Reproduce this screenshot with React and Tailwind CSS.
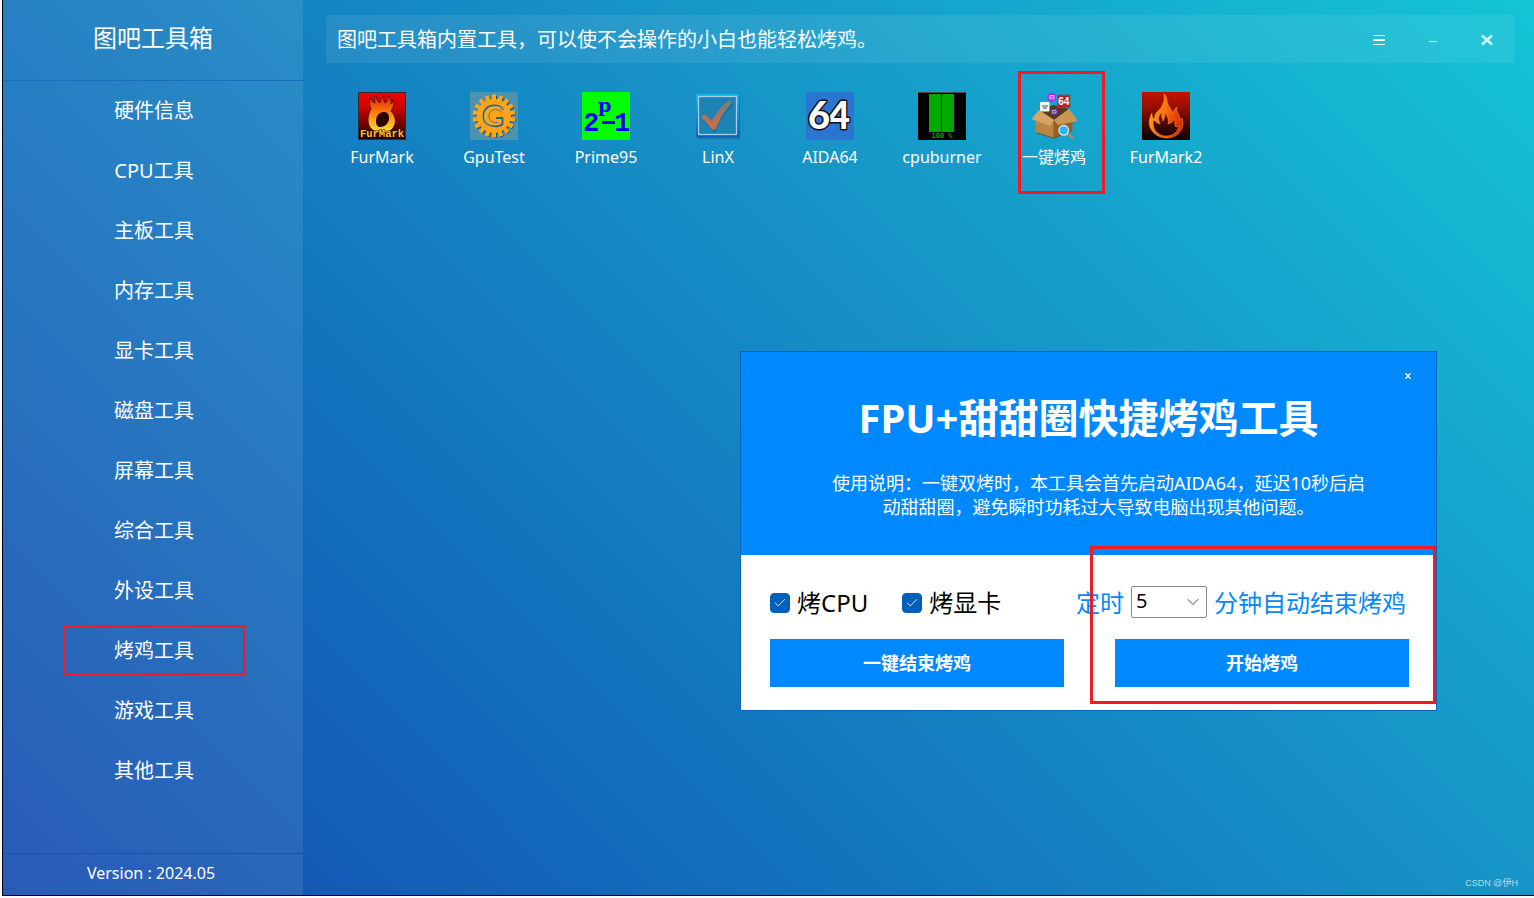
import React, { useState } from "react";
import { Check, ChevronDown } from "lucide-react";

const categories = [
  "硬件信息", "CPU工具", "主板工具", "内存工具", "显卡工具", "磁盘工具",
  "屏幕工具", "综合工具", "外设工具", "烤鸡工具", "游戏工具", "其他工具",
];

const FurMarkIcon = () => (
  <svg width="48" height="48" viewBox="0 0 48 48" aria-hidden="true">
    <defs>
      <linearGradient id="fmBg" x1="0" y1="0" x2="0" y2="1">
        <stop offset="0" stopColor="#f00500" />
        <stop offset="0.35" stopColor="#c80400" />
        <stop offset="1" stopColor="#150000" />
      </linearGradient>
      <linearGradient id="fmFlame" x1="0" y1="0" x2="0" y2="1">
        <stop offset="0" stopColor="#d81c00" />
        <stop offset="0.45" stopColor="#ff7a10" />
        <stop offset="1" stopColor="#ffe437" />
      </linearGradient>
    </defs>
    <rect x="0.5" y="0.5" width="47" height="47" fill="url(#fmBg)" stroke="#3b2a2c" />
    <path
      d="M13 17c-2-4-2-8 0-12 1 4 2 5 4 6-1-4-1-6 1-8 1 4 2 7 4 8 0-3 1-5 4-8-1 4 0 6 1 8 2-1 3-4 3-8 3 4 4 7 3 9 1-1 2-3 2-5 2 5 0 9-2 12 4 4 5 9 4 13-2 6-7 9-13 9-8 0-14-5-14-13 0-4 1-8 3-11z"
      fill="url(#fmFlame)" stroke="#3a0800" strokeWidth="0.8"
    />
    <path d="M26 20c-5 0-8 4-8 9 0 4 2 6 4 6 5 0 9-4 9-9 0-4-2-6-5-6z" fill="#2a0300" />
    <text x="24" y="45" textAnchor="middle" fontFamily="Liberation Mono" fontWeight="700" fontSize="10.500" fill="#ffc61c" stroke="#1a0000" strokeWidth="1" paintOrder="stroke">FurMark</text>
  </svg>
);

const GpuTestIcon = () => (
  <svg width="48" height="48" viewBox="0 0 48 48" aria-hidden="true">
    <rect width="48" height="48" fill="#4c93b0" />
    <g transform="translate(1 1)" fill="#1c5878">
      <circle cx="24" cy="24" r="17" />
      {Array.from({ length: 18 }).map((_, i) => (
        <rect key={i} x="22" y="3" width="4" height="6" transform={`rotate(${i * 20} 24 24)`} />
      ))}
    </g>
    <g fill="#ffa516">
      <circle cx="24" cy="24" r="17" />
      {Array.from({ length: 18 }).map((_, i) => (
        <rect key={i} x="22" y="2.6" width="4" height="6" transform={`rotate(${i * 20} 24 24)`} />
      ))}
    </g>
    <path d="M33.500 18c-2-3.500-5-4.500-9-4.500-7 0-11 4-11 10.500s4 10.500 11 10.500c4 0 6.500-1 8-2.500v-6h-6.500" fill="none" stroke="#2f6272" strokeWidth="1.800" />
    <path d="M34.500 18.500c-2-3-5-4-9-4-7 0-11 4-11 10.500s4 10.500 11 10.500" fill="none" stroke="#d9c79a" strokeWidth="0.600" />
    <path d="M32 20.500c-2-2-4-2.800-6.500-2.800-4 0-6.500 2.300-6.500 6.300s2.500 6.500 6.500 6.500h3" fill="none" stroke="#54736d" strokeWidth="1" />
  </svg>
);

const Prime95Icon = () => (
  <svg width="48" height="48" viewBox="0 0 48 48" aria-hidden="true">
    <rect width="48" height="48" fill="#00ff00" />
    <g fill="#0000ff" fontWeight="700">
      <text x="1" y="39" fontFamily="Liberation Mono" fontSize="27">2</text>
      <text x="16" y="20" fontFamily="DejaVu Serif" fontSize="19">p</text>
      <rect x="20" y="29" width="13" height="3" />
      <text x="32" y="39" fontFamily="Liberation Mono" fontSize="27">1</text>
    </g>
  </svg>
);

const LinXIcon = () => (
  <svg width="48" height="48" viewBox="0 0 48 48" aria-hidden="true">
    <defs>
      <linearGradient id="lxFrame" x1="0" y1="0" x2="0" y2="1">
        <stop offset="0" stopColor="#12b4f2" />
        <stop offset="1" stopColor="#0b5cc0" />
      </linearGradient>
      <linearGradient id="lxCheck" x1="0" y1="0" x2="0" y2="1">
        <stop offset="0" stopColor="#6b7f86" />
        <stop offset="1" stopColor="#dc6a3c" />
      </linearGradient>
    </defs>
    <rect x="3" y="4" width="43" height="43" rx="1" fill="#0b5a86" opacity="0.5" />
    <rect x="2" y="2" width="43" height="43" rx="1" fill="url(#lxFrame)" />
    <rect x="4.500" y="4.500" width="38" height="38" fill="#1c84b4" stroke="#a9cfe6" strokeWidth="1.300" />
    <path d="M10 25l9 10c4-10 9-18 18-25" fill="none" stroke="#0f638e" strokeWidth="5" transform="translate(1 2)" opacity="0.4" />
    <path d="M8 26c-1-3 2-4 4-3l6 6C22 21 28 13 34 9c2-2 5 0 3 3-7 7-11 15-15 24-1 2-4 2-5 0z" fill="url(#lxCheck)" />
  </svg>
);

const Aida64Icon = () => (
  <svg width="48" height="48" viewBox="0 0 48 48" aria-hidden="true">
    <rect width="48" height="48" fill="#2b75d2" />
    <g fontFamily="Lato" fontWeight="900" fontSize="38" fill="#fff" stroke="#111" strokeWidth="3" paintOrder="stroke" strokeLinejoin="round">
      <text x="22" y="37">4</text>
      <text x="2" y="37">6</text>
    </g>
  </svg>
);

const CpuBurnerIcon = () => (
  <svg width="48" height="48" viewBox="0 0 48 48" aria-hidden="true">
    <rect width="48" height="48" fill="#000" />
    <rect width="48" height="1" fill="#4a4a4a" />
    <rect x="11" y="2" width="12" height="38" fill="#00aa00" />
    <rect x="24" y="2" width="12" height="38" fill="#00aa00" />
    <text x="24" y="46" textAnchor="middle" fontFamily="DejaVu Sans Mono" fontWeight="700" fontSize="7" fill="#00a000">100 %</text>
  </svg>
);

const BoxIcon = () => (
  <svg width="48" height="48" viewBox="0 0 48 48" aria-hidden="true">
    <path d="M9 18l14.500-5L39 17 24 28z" fill="#5c3a17" />
    <circle cx="21.700" cy="5.300" r="4.300" fill="#b21fe6" />
    <path d="M19.500 3.500h4.500v3.500h-4.500zM19.500 5.200h4.500" fill="none" stroke="#f3b6ff" strokeWidth="0.900" />
    <rect x="27.500" y="3" width="12.500" height="12.500" fill="#b5232a" stroke="#5d5f6a" strokeWidth="0.800" />
    <text x="33.800" y="13" textAnchor="middle" fontFamily="Liberation Sans" fontWeight="700" fontSize="10" fill="#fff">64</text>
    <rect x="10" y="10" width="9.500" height="9.500" rx="1" fill="#f4f4f4" />
    <path d="M12 14h6M13 16h4" stroke="#555" strokeWidth="1.200" />
    <rect x="21" y="16.500" width="6.500" height="6.500" fill="#58359d" />
    <path d="M22.500 18.500h3.500v2.500h-3.500z" fill="none" stroke="#d9c8ff" strokeWidth="0.800" />
    <path d="M5.500 25l18 3v18.500L5.500 40z" fill="#b98444" />
    <path d="M23.500 28l19-3v14l-19 7.500z" fill="#956026" />
    <path d="M9 18l15 10-4 6L1.500 27z" fill="#d6a563" />
    <path d="M39 17L24 28l4 5 20-4z" fill="#c99654" />
    <path d="M7 41l16.500 5 18-7" fill="none" stroke="#704515" strokeWidth="0.800" />
    <path d="M37.500 42l4.500 3.500" stroke="#b88961" strokeWidth="2.500" strokeLinecap="round" />
    <circle cx="33.700" cy="38.300" r="4.800" fill="#28b4ee" stroke="#d8eef8" strokeWidth="1.300" />
  </svg>
);

const FurMark2Icon = () => (
  <svg width="48" height="48" viewBox="0 0 48 48" aria-hidden="true">
    <defs>
      <linearGradient id="fm2Bg" x1="0" y1="0" x2="0" y2="1">
        <stop offset="0" stopColor="#c41200" />
        <stop offset="0.300" stopColor="#9c0e00" />
        <stop offset="1" stopColor="#050000" />
      </linearGradient>
      <linearGradient id="fm2Flame" x1="0" y1="0" x2="1" y2="0.400">
        <stop offset="0" stopColor="#ffa51c" />
        <stop offset="0.500" stopColor="#f87812" />
        <stop offset="1" stopColor="#e52c04" />
      </linearGradient>
    </defs>
    <rect width="48" height="48" fill="url(#fm2Bg)" />
    <path
      d="M22 2c4 3 2 8 5 12 2 3 3 5 3 7 2-2 2-4 5-6-1 5 1 6 2 8 0 2 1 4 1 5l2-2c2 7 0 12-4 16-7 6-18 5-24-1-6-6-6-13-2-20 0 4 1 6 3 8-2-9 5-10 7-15 2-4 3-8 2-12z
         M20 20c-4 4-4 7-2 12-4-1-5-3-6-6-3 10 3 18 12 18 8 0 12-5 13-10-2 1-3 1-4 0 0-3 0-5-1-7-1 3-3 4-6 5 1-4 0-7-3-11 0 4-1 6-2 8-1-3-2-5-1-9z"
      fill="url(#fm2Flame)" fillRule="evenodd" stroke="#f8a030" strokeWidth="0.500"
    />
  </svg>
);

const tools = [
  { name: "FurMark", Icon: FurMarkIcon },
  { name: "GpuTest", Icon: GpuTestIcon },
  { name: "Prime95", Icon: Prime95Icon },
  { name: "LinX", Icon: LinXIcon },
  { name: "AIDA64", Icon: Aida64Icon },
  { name: "cpuburner", Icon: CpuBurnerIcon },
  { name: "一键烤鸡", Icon: BoxIcon, marked: true },
  { name: "FurMark2", Icon: FurMark2Icon },
];

const Sidebar = ({ active, onSelect }) => (
  <aside className="flex w-[300px] shrink-0 flex-col bg-white/9 text-white">
    <h1 className="flex h-20 items-center justify-center pb-1 text-2xl">图吧工具箱</h1>
    <nav className="flex flex-1 flex-col border-t border-[#1c6dbd]">
      {categories.map((name) => (
        <button key={name} onClick={() => onSelect(name)}
          className="relative h-[60px] w-full pl-0.5 text-center text-xl">
          {name}
          {name === active && (
            <span className="pointer-events-none absolute top-1 right-[58px] bottom-1.5 left-[60px] border-2 border-[#ed1c24]" />
          )}
        </button>
      ))}
    </nav>
    <div className="flex h-[42px] items-center justify-center border-t border-[#1a50b0] pr-1 pb-1 text-base">
      Version : 2024.05
    </div>
  </aside>
);

const TopBar = () => (
  <header className="flex h-12 items-center bg-white/8 pl-[11px] text-white">
    <p className="flex-1 pt-0.5 text-xl">图吧工具箱内置工具，可以使不会操作的小白也能轻松烤鸡。</p>
    <button aria-label="菜单" className="flex h-full w-[54px] items-center justify-center pt-0.5">
      <svg width="12" height="10" viewBox="0 0 12 10" fill="#fff">
        <path d="M0 0h12v1H0zM0 4h12v2H0zM0 9h12v1H0z" />
      </svg>
    </button>
    <button aria-label="最小化" className="flex h-full w-[54px] items-center justify-center pt-0.5">
      <svg width="8" height="10" viewBox="0 0 8 10"><path d="M0 6.500h8" stroke="#b5ebf1" strokeWidth="1.200" /></svg>
    </button>
    <button aria-label="关闭" className="flex h-full w-[54px] items-center justify-center pt-0.5">
      <svg width="12" height="12" viewBox="0 0 12 12"><path d="M1 1.500l10 9M11 1.500l-10 9" stroke="#cdf3f6" strokeWidth="2.600" /></svg>
    </button>
  </header>
);

const CheckOption = ({ label, checked, onChange }) => (
  <label className="flex items-center gap-[7px] text-2xl text-black">
    <span className="relative flex size-5">
      <input type="checkbox" checked={checked} onChange={onChange}
        className="size-5 appearance-none rounded border border-[#005fb8] checked:bg-[#005fb8]" />
      {checked && (
        <Check size={14} strokeWidth={1.5} className="pointer-events-none absolute top-[3px] left-[3px] text-white" />
      )}
    </span>
    {label}
  </label>
);

const BurnDialog = () => {
  const [cpu, setCpu] = useState(true);
  const [gpu, setGpu] = useState(true);
  const [minutes, setMinutes] = useState("5");

  return (
    <section role="dialog" aria-labelledby="burn-title"
      className="absolute top-[351px] right-[97px] w-[697px] border border-[#0a62c2] bg-white">
      <div className="relative bg-[#0088ff] px-20 pt-9 pb-9 text-center text-white">
        <button aria-label="关闭" className="absolute top-4 right-5 flex size-4 items-center justify-center">
          <svg width="6" height="6" viewBox="0 0 6 6"><path d="M0.500 0l5 6M5.500 0l-5 6" stroke="#fff" strokeWidth="1.300" /></svg>
        </button>
        <h2 id="burn-title" className="text-[40px] leading-[59px] font-bold whitespace-nowrap">FPU+甜甜圈快捷烤鸡工具</h2>
        <p className="mt-6 -mr-5 text-lg leading-6 whitespace-nowrap">
          使用说明：一键双烤时，本工具会首先启动AIDA64，延迟10秒后启<br />
          动甜甜圈，避免瞬时功耗过大导致电脑出现其他问题。
        </p>
      </div>

      <div className="relative pt-8 pr-[27px] pb-[23px] pl-[29px]">
        <div className="flex h-8 items-center">
          <CheckOption label="烤CPU" checked={cpu} onChange={(e) => setCpu(e.target.checked)} />
          <div className="ml-[34px]">
            <CheckOption label="烤显卡" checked={gpu} onChange={(e) => setGpu(e.target.checked)} />
          </div>
          <div className="mr-[3px] ml-auto flex items-center gap-[7px] text-2xl text-[#0088ff]">
            <label htmlFor="minutes">定时</label>
            <div className="relative flex pb-0.5">
              <select id="minutes" value={minutes} onChange={(e) => setMinutes(e.target.value)}
                className="h-8 w-[76px] appearance-none rounded-xs border border-[#8a8a8a] bg-white pb-0.5 pl-1 text-xl leading-7 text-black">
                <option>5</option>
                <option>10</option>
                <option>30</option>
              </select>
              <ChevronDown size={20} strokeWidth={1.2} className="pointer-events-none absolute top-1.5 right-1 text-[#4a4a4a]" />
            </div>
            <span>分钟自动结束烤鸡</span>
          </div>
        </div>
        <div className="mt-5 flex justify-between text-lg font-bold text-white">
          <button className="h-12 w-[294px] bg-[#0088ff]">一键结束烤鸡</button>
          <button className="h-12 w-[294px] bg-[#0088ff]">开始烤鸡</button>
        </div>
        <span className="pointer-events-none absolute -top-[9px] right-0 bottom-1.5 w-[346px] border-3 border-[#ed1c24]" />
      </div>
    </section>
  );
};

const App = () => {
  const [active, setActive] = useState("烤鸡工具");

  return (
    <div className="flex min-h-screen bg-[#f9f9fb] pb-[2px] pl-[2px] font-['Noto_Sans','Noto_Sans_CJK_SC',sans-serif]">
      <div className="relative flex flex-1 border-b border-l border-black bg-[linear-gradient(45deg,#144ab0_0%,#1275be_37%,#1794c7_63%,#13c4d6_100%)]">
        <Sidebar active={active} onSelect={setActive} />
        <main className="flex-1 pt-[15px] pr-5 pl-[23px]">
          <TopBar />
          <div className="mt-[29px] flex flex-wrap">
            {tools.map(({ name, Icon, marked }) => (
              <button key={name} className="relative flex w-28 flex-col items-center gap-[5px] text-base text-white">
                <Icon />
                <span>{name}</span>
                {marked && (
                  <span className="pointer-events-none absolute -top-[21px] left-5 h-[123px] w-[87px] border-3 border-[#ed1c24]" />
                )}
              </button>
            ))}
          </div>
        </main>
        <BurnDialog />
        <span className="absolute right-4 bottom-1.5 font-['Liberation_Sans','Noto_Sans_CJK_SC',sans-serif] text-[9px] leading-3 text-[#b9dbe9]">CSDN @伊H</span>
      </div>
    </div>
  );
};

export default App;
